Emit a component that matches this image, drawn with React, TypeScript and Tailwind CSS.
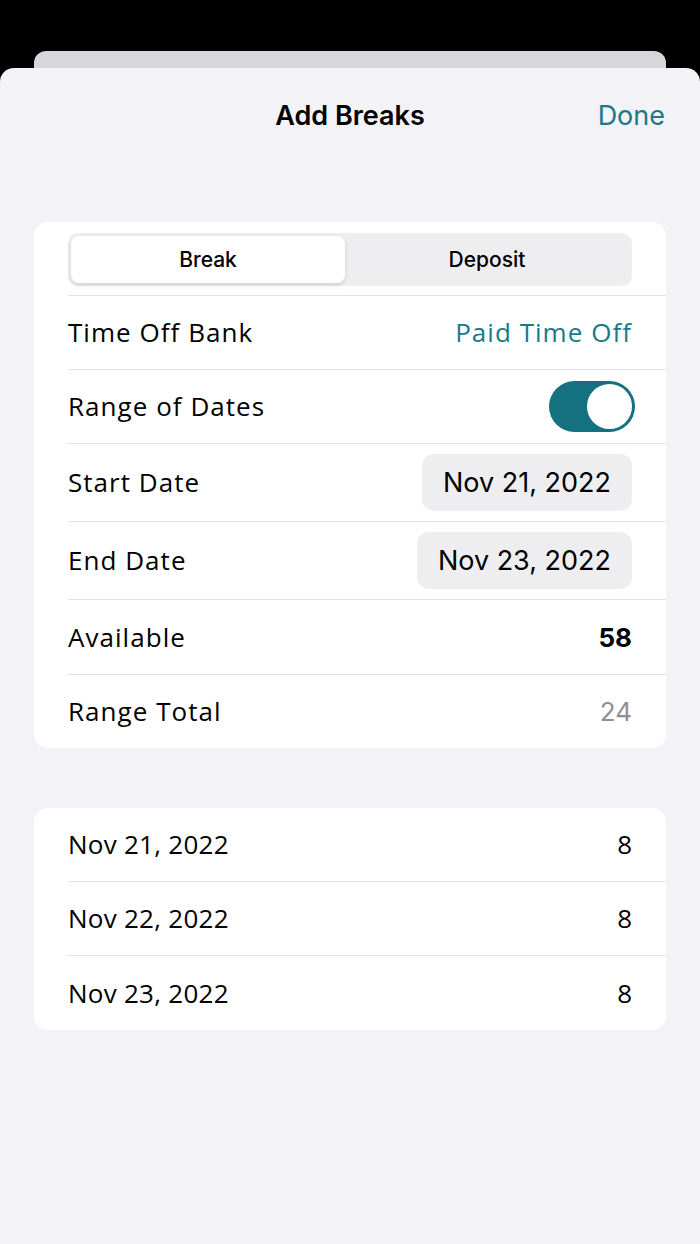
import React from 'react'

const poppins = "font-['Open_Sans',sans-serif]"
const sf = "font-['Inter','Liberation_Sans',sans-serif]"

function Row({
  label,
  children,
  height = 'h-[74px]',
  last = false,
  tight = false,
}: {
  label: string
  children?: React.ReactNode
  height?: string
  last?: boolean
  tight?: boolean
}) {
  return (
    <div className={`flex items-center justify-between pr-[34px] ${height} ${last ? '' : 'border-b border-[#e2e2e6]'}`}>
      <span className={`${poppins} ${tight ? 'tracking-[0.01em]' : 'tracking-[0.04em]'} text-[26px] text-black`}>{label}</span>
      {children}
    </div>
  )
}

function DatePill({ value }: { value: string }) {
  return (
    <div className={`${sf} h-[57px] px-[21px] pt-[2px] flex items-center rounded-[12px] bg-[#eeeef0] text-[27px] text-black`}>
      {value}
    </div>
  )
}

export default function App() {
  const days = ['Nov 21, 2022', 'Nov 22, 2022', 'Nov 23, 2022']
  return (
    <div className="w-[700px] h-[1244px] bg-black flex flex-col overflow-hidden">
      <div className="mx-[34px] mt-[51px] h-[17px] bg-[#d6d6db] rounded-t-[12px]" />
      <div className="flex-1 bg-[#f2f2f7] rounded-t-[14px]">
        {/* header */}
        <div className="relative h-[94px] pt-[2px] flex items-center justify-center">
          <span className={`${sf} text-[27px] font-semibold text-black`}>Add Breaks</span>
          <span className={`${sf} absolute right-[35px] text-[27px] text-[#19798b]`}>Done</span>
        </div>

        {/* settings card */}
        <div className="mx-[34px] mt-[60px] rounded-[14px] bg-white pl-[34px]">
          <div className="pt-[11px] pb-[9px] pr-[34px] border-b border-[#e2e2e6]">
            <div className="h-[53px] flex rounded-[10px] bg-[#eeeef0] p-[3px]">
              <div className={`${sf} w-[274px] flex items-center justify-center rounded-[8px] bg-white shadow-[0_2px_5px_rgba(0,0,0,0.13)] text-[21px] font-medium`}>
                Break
              </div>
              <div className={`${sf} flex-1 flex items-center justify-center text-[21px] font-medium`}>Deposit</div>
            </div>
          </div>
          <Row label="Time Off Bank">
            <span className={`${poppins} tracking-[0.04em] text-[26px] text-[#19798b]`}>Paid Time Off</span>
          </Row>
          <Row label="Range of Dates">
            <div className="-mr-[3px] w-[86px] h-[51px] rounded-full bg-[#15707f] flex items-center justify-end pr-[1px]">
              <div className="w-[49px] h-[49px] rounded-full bg-white border-[2px] border-[#15707f]" />
            </div>
          </Row>
          <Row label="Start Date" height="h-[78px]">
            <DatePill value="Nov 21, 2022" />
          </Row>
          <Row label="End Date" height="h-[78px]">
            <DatePill value="Nov 23, 2022" />
          </Row>
          <Row label="Available" height="h-[75px]">
            <span className={`${sf} text-[26px] font-bold text-black`}>58</span>
          </Row>
          <Row label="Range Total" height="h-[73px]" last>
            <span className={`${sf} text-[26px] text-[#8e8e93]`}>24</span>
          </Row>
        </div>

        {/* day list */}
        <div className="mx-[34px] mt-[60px] rounded-[14px] bg-white pl-[34px]">
          {days.map((d, i) => (
            <Row key={d} label={d} last={i === days.length - 1} tight>
              <span className={`${poppins} text-[26px] text-black`}>8</span>
            </Row>
          ))}
        </div>
      </div>
    </div>
  )
}
